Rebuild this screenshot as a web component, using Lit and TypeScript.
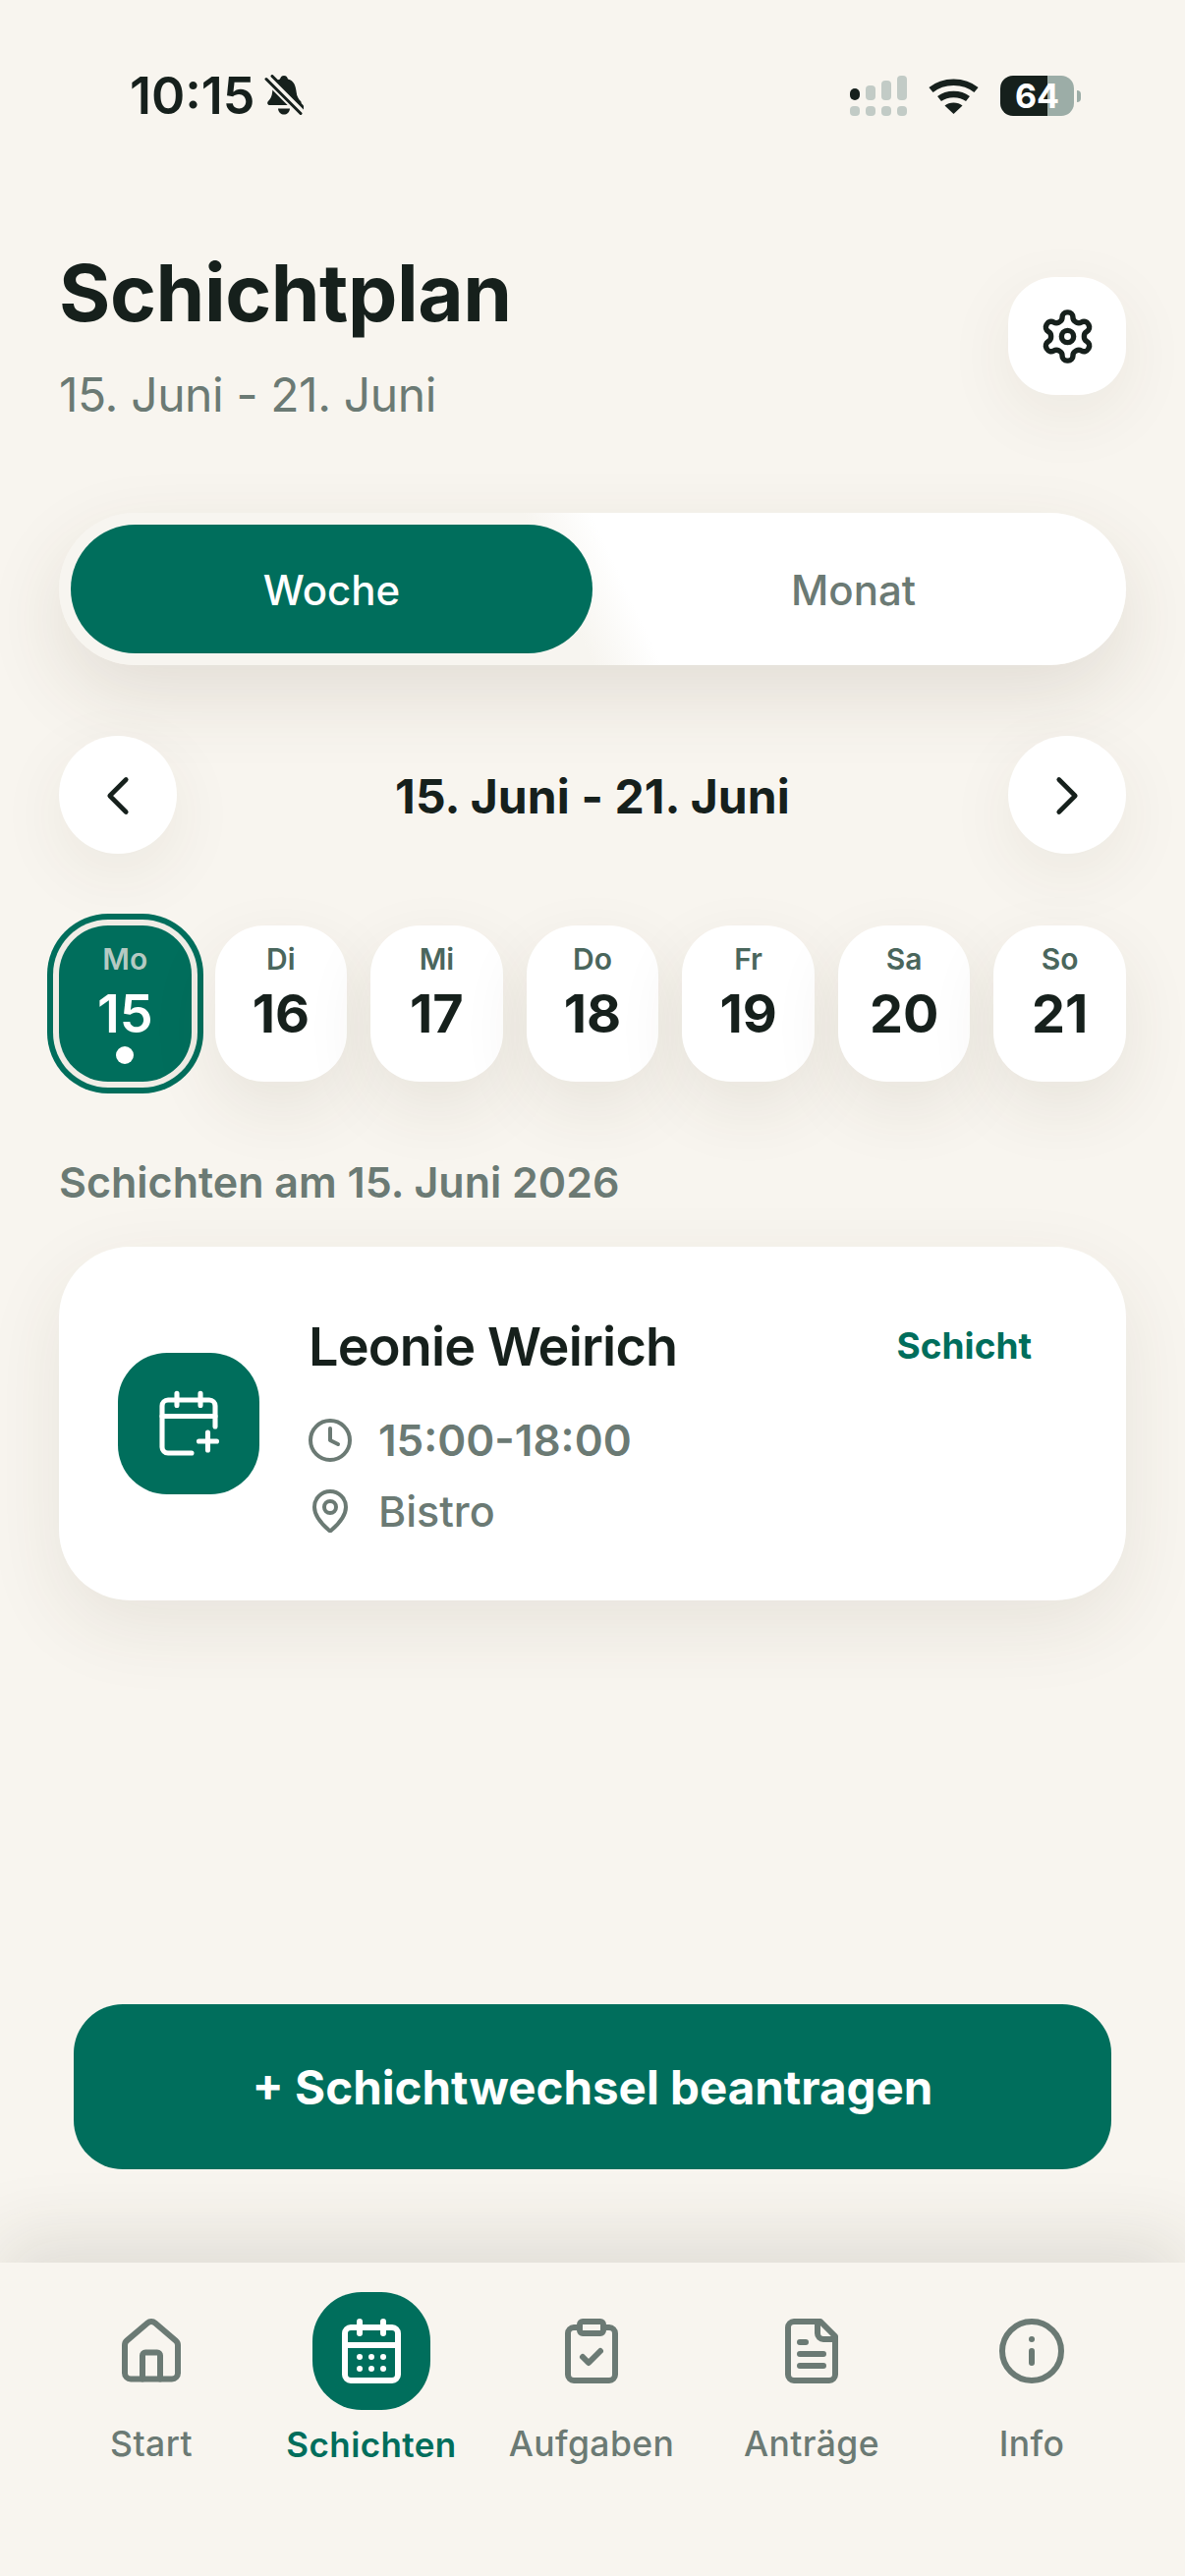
import { LitElement, html, css, svg } from 'lit';
import { customElement } from 'lit/decorators.js';

const icon = (size: number, width: number, body: unknown) => html`
  <svg
    width=${size}
    height=${size}
    viewBox="0 0 24 24"
    fill="none"
    stroke="currentColor"
    stroke-width=${width}
    stroke-linecap="round"
    stroke-linejoin="round"
  >${body}</svg>
`;

const GEAR = svg`
  <path d="M12.22 2h-.44a2 2 0 0 0-2 2v.18a2 2 0 0 1-1 1.73l-.43.25a2 2 0 0 1-2 0l-.15-.08a2 2 0 0 0-2.73.73l-.22.38a2 2 0 0 0 .73 2.73l.15.1a2 2 0 0 1 1 1.72v.51a2 2 0 0 1-1 1.74l-.15.09a2 2 0 0 0-.73 2.73l.22.38a2 2 0 0 0 2.73.73l.15-.08a2 2 0 0 1 2 0l.43.25a2 2 0 0 1 1 1.73V20a2 2 0 0 0 2 2h.44a2 2 0 0 0 2-2v-.18a2 2 0 0 1 1-1.73l.43-.25a2 2 0 0 1 2 0l.15.08a2 2 0 0 0 2.73-.73l.22-.39a2 2 0 0 0-.73-2.73l-.15-.08a2 2 0 0 1-1-1.74v-.5a2 2 0 0 1 1-1.74l.15-.09a2 2 0 0 0 .73-2.73l-.22-.38a2 2 0 0 0-2.73-.73l-.15.08a2 2 0 0 1-2 0l-.43-.25a2 2 0 0 1-1-1.73V4a2 2 0 0 0-2-2z"/>
  <circle cx="12" cy="12" r="2.5"/>
`;
const CHEVRON_LEFT = svg`<path d="m15 18-6-6 6-6"/>`;
const CHEVRON_RIGHT = svg`<path d="m9 18 6-6-6-6"/>`;
const CALENDAR_PLUS = svg`
  <path d="M8 1.800v4M16 1.800v4M3 9.500h18"/>
  <path d="M21 13V6a2 2 0 0 0-2-2H5a2 2 0 0 0-2 2v14a2 2 0 0 0 2 2h8"/>
  <path d="M15.500 18h6M18.500 15v6"/>
`;
const CLOCK = svg`<circle cx="12" cy="12" r="10"/><path d="M12 6v6l4 2"/>`;
const PIN = svg`
  <path d="M20 10c0 4.993-5.539 10.193-7.399 11.799a1 1 0 0 1-1.202 0C9.539 20.193 4 14.993 4 10a8 8 0 0 1 16 0"/>
  <circle cx="12" cy="10" r="3"/>
`;
const HOME = svg`
  <path d="M15 21.500v-8a1 1 0 0 0-1-1h-4a1 1 0 0 0-1 1v8"/>
  <path d="M3 10a2 2 0 0 1 .709-1.528l7-5.999a2 2 0 0 1 2.582 0l7 5.999A2 2 0 0 1 21 10v9.500a2 2 0 0 1-2 2H5a2 2 0 0 1-2-2z"/>
`;
const CALENDAR = svg`
  <path d="M8 2v4M16 2v4"/>
  <rect width="18" height="18" x="3" y="4" rx="2"/>
  <path d="M3 10h18"/>
  <path d="M8 14h.01M12 14h.01M16 14h.01M8 18h.01M12 18h.01M16 18h.01"/>
`;
const CLIPBOARD = svg`
  <rect width="8" height="4" x="8" y="2" rx="1"/>
  <path d="M16 4h2a2 2 0 0 1 2 2v14a2 2 0 0 1-2 2H6a2 2 0 0 1-2-2V6a2 2 0 0 1 2-2h2"/>
  <path d="m9 14 2 2 4-4"/>
`;
const FILE = svg`
  <path d="M15 2H6a2 2 0 0 0-2 2v16a2 2 0 0 0 2 2h12a2 2 0 0 0 2-2V7Z"/>
  <path d="M14 2v4a2 2 0 0 0 2 2h4"/>
  <path d="M10 9H8M16 13H8M16 17H8"/>
`;
const INFO = svg`<circle cx="12" cy="12" r="10"/><path d="M12 16v-4M12 8h.01"/>`;

const DAYS = [
  { dow: 'Mo', num: 15, selected: true },
  { dow: 'Di', num: 16 },
  { dow: 'Mi', num: 17 },
  { dow: 'Do', num: 18 },
  { dow: 'Fr', num: 19 },
  { dow: 'Sa', num: 20 },
  { dow: 'So', num: 21 },
];

const TABS = [
  { label: 'Start', icon: HOME },
  { label: 'Schichten', icon: CALENDAR, active: true },
  { label: 'Aufgaben', icon: CLIPBOARD },
  { label: 'Anträge', icon: FILE },
  { label: 'Info', icon: INFO },
];

@customElement('app-root')
export class AppRoot extends LitElement {
  static styles = css`
    :host {
      display: block;
      width: 1206px;
      height: 2622px;
      overflow: hidden;
      background: #f8f5ef;
      color: #16201c;
      font-family: Inter, 'Noto Sans', sans-serif;
    }

    .page {
      display: flex;
      flex-direction: column;
      height: 2622px;
    }

    /* --- Status bar --- */
    .status {
      display: flex;
      align-items: center;
      height: 41px;
      padding: 77px 106px 0 132px;
    }
    .time {
      font-size: 52px;
      font-weight: 600;
      line-height: 41px;
    }
    .bell {
      margin-left: 9px;
      display: block;
    }
    .status-right {
      display: flex;
      align-items: center;
      margin-left: auto;
    }
    .wifi {
      margin-left: 22px;
      display: block;
    }
    .battery {
      display: flex;
      align-items: center;
      justify-content: center;
      width: 75px;
      height: 41px;
      margin-left: 22px;
      border-radius: 13px;
      background: linear-gradient(90deg, #16201c 0 48px, #9cada7 48px);
      color: #fff;
      font-size: 34px;
      font-weight: 700;
      line-height: 41px;
    }
    .nub {
      width: 4px;
      height: 12px;
      margin-left: 3px;
      border-radius: 0 6px 6px 0;
      background: #9cada7;
    }

    /* --- Main column --- */
    .main {
      display: flex;
      flex-direction: column;
      padding: 0 60px;
    }

    .header {
      display: flex;
      justify-content: space-between;
      margin-top: 140px;
    }
    h1 {
      margin: 0;
      font-size: 80px;
      font-weight: 700;
      line-height: 80px;
      letter-spacing: -0.45px;
    }
    .subtitle {
      margin-top: 34px;
      font-size: 48px;
      font-weight: 400;
      line-height: 60px;
      letter-spacing: -0.4px;
      color: #6b7a74;
    }
    .round-btn {
      display: flex;
      align-items: center;
      justify-content: center;
      width: 120px;
      height: 120px;
      background: #fff;
      box-shadow: 0 20px 70px rgba(70, 60, 35, 0.07);
      color: #16201c;
    }
    .gear {
      margin-top: 24px;
      border-radius: 48px;
    }

    .segment {
      display: grid;
      grid-template-columns: 1fr 1fr;
      height: 155px;
      margin-top: 90px;
      padding: 12px;
      box-sizing: border-box;
      border-radius: 78px;
      background: linear-gradient(65deg, #f7f5f0 0 47%, #fff 53%);
      box-shadow: 0 30px 80px rgba(70, 60, 35, 0.12);
    }
    .seg-item {
      display: flex;
      align-items: center;
      justify-content: center;
      padding-top: 2px;
      border-radius: 66px;
      font-size: 42px;
      font-weight: 500;
      color: #6b7a74;
    }
    .seg-item.on {
      background: #006e5c;
      color: #fff;
    }

    .week-nav {
      display: flex;
      align-items: center;
      justify-content: space-between;
      margin-top: 72px;
    }
    .week-nav .round-btn {
      border-radius: 50%;
    }
    .week-nav svg {
      margin-top: 2px;
    }
    .week-label {
      padding-top: 2px;
      font-size: 48px;
      font-weight: 700;
      letter-spacing: 0.1px;
    }

    .days {
      display: grid;
      grid-template-columns: repeat(7, 1fr);
      gap: 24px;
      margin-top: 73px;
    }
    .day {
      display: flex;
      flex-direction: column;
      align-items: center;
      height: 159px;
      padding-top: 16px;
      box-sizing: border-box;
      border-radius: 50px;
      background: #fff;
      box-shadow: 0 26px 70px rgba(70, 60, 35, 0.09);
    }
    .dow {
      font-size: 30px;
      font-weight: 600;
      line-height: 36px;
      color: #4a665c;
    }
    .num {
      margin-top: 8px;
      font-size: 54px;
      font-weight: 700;
      line-height: 60px;
    }
    .day.sel {
      background: #006e5c;
      box-shadow: 0 0 0 6px #f0ede6, 0 0 0 12px #006e5c;
    }
    .day.sel .dow {
      color: #b5cac3;
    }
    .day.sel .num {
      color: #fff;
      font-weight: 600;
    }
    .dot {
      width: 18px;
      height: 18px;
      margin-top: 3px;
      border-radius: 50%;
      background: #fff;
    }

    .section {
      margin-top: 78px;
      font-size: 43px;
      font-weight: 600;
      line-height: 48px;
      color: #6b7a74;
    }

    .card {
      display: flex;
      height: 360px;
      margin-top: 42px;
      padding: 0 96px 0 60px;
      box-sizing: border-box;
      border-radius: 72px;
      background: #fff;
      box-shadow: 0 26px 80px rgba(70, 60, 35, 0.09);
    }
    .tile {
      display: flex;
      flex: none;
      align-items: center;
      justify-content: center;
      align-self: center;
      width: 144px;
      height: 144px;
      border-radius: 50px;
      background: #006e5c;
      color: #fff;
    }
    .info {
      flex: 1;
      margin-left: 50px;
      padding-top: 69px;
    }
    .name-row {
      display: flex;
      align-items: center;
      justify-content: space-between;
      height: 64px;
    }
    .name {
      font-size: 54px;
      font-weight: 600;
      letter-spacing: -0.85px;
    }
    .kind {
      padding-bottom: 2px;
      font-size: 37px;
      font-weight: 700;
      color: #006e5c;
    }
    .meta {
      display: flex;
      align-items: center;
      gap: 25px;
      height: 48px;
      margin-left: -2px;
      color: #6b7a74;
      font-size: 43px;
    }
    .meta svg {
      display: block;
      flex: none;
    }
    .meta.time-row {
      margin-top: 40px;
      font-size: 44px;
      font-weight: 600;
    }
    .meta.place-row {
      margin-top: 24px;
      font-weight: 500;
    }

    .action {
      display: flex;
      align-items: center;
      justify-content: center;
      height: 168px;
      margin: 411px 15px 0;
      border-radius: 50px;
      background: #006e5c;
      color: #fff;
      font-size: 47.5px;
      font-weight: 700;
    }

    /* --- Tab bar --- */
    .tabbar {
      display: grid;
      grid-template-columns: repeat(5, 224px);
      margin-top: auto;
      height: 319px;
      padding: 30px 42px 0;
      box-sizing: border-box;
      background: #f8f5ef;
      box-shadow: 0 -24px 70px rgba(50, 50, 35, 0.12);
    }
    .tab {
      display: flex;
      flex-direction: column;
      align-items: center;
      color: #6b7a74;
    }
    .tab-icon {
      display: flex;
      align-items: center;
      justify-content: center;
      width: 120px;
      height: 120px;
      border-radius: 50px;
    }
    .tab-label {
      margin-top: 13px;
      font-size: 35.5px;
      font-weight: 500;
      line-height: 44px;
      letter-spacing: 0.4px;
    }
    .tab.on {
      color: #006e5c;
    }
    .tab.on .tab-icon {
      background: #006e5c;
      color: #fff;
    }
    .tab.on .tab-label {
      font-size: 35px;
      font-weight: 600;
    }
  `;

  private _statusBar() {
    return html`
      <div class="status">
        <span class="time">10:15</span>
        <svg class="bell" width="40" height="44" viewBox="0 0 40 44" fill="#16201c">
          <path d="M20 1c2.400 0 3.600 1.600 4 3.600 6.200 1.600 8 7 8.600 13 .5 4.800 2 7 4.400 9.500 1.200 1.300.6 4-1.500 4H5.500c-2.400 0-3-2.600-1.500-4 2.500-2.500 3.700-4.800 4.200-9.500.6-6 2.300-11.400 7.800-13C16.400 2.600 17.600 1 20 1z"/>
          <path d="M14 34.500h12c-.5 4-3 6-6 6s-5.500-2-6-6z"/>
          <path d="M3 4l33 33" stroke="#f8f5ef" stroke-width="9"/>
          <path d="M2 4.500l35 35" stroke="#16201c" stroke-width="3" stroke-linecap="round"/>
          <path d="M8 1.500l33 33" stroke="#16201c" stroke-width="3" stroke-linecap="round"/>
        </svg>
        <div class="status-right">
          <svg width="58" height="41" viewBox="0 0 58 41">
            <rect x="0" y="13" width="10" height="12" rx="5" fill="#16201c"/>
            <rect x="16" y="10" width="10" height="15" rx="4" fill="#c2cbc6"/>
            <rect x="32" y="5" width="10" height="20" rx="4" fill="#c2cbc6"/>
            <rect x="48" y="0" width="10" height="25" rx="4" fill="#c2cbc6"/>
            <rect x="0" y="31" width="10" height="10" rx="4" fill="#c2cbc6"/>
            <rect x="16" y="31" width="10" height="10" rx="4" fill="#c2cbc6"/>
            <rect x="32" y="31" width="10" height="10" rx="4" fill="#c2cbc6"/>
            <rect x="48" y="31" width="10" height="10" rx="4" fill="#c2cbc6"/>
          </svg>
          <svg class="wifi" width="51" height="37" viewBox="0 0 51 37" fill="none" stroke="#16201c">
            <path d="M2.500 12.500C15 2 36 2 48.500 12.500" stroke-width="6.500"/>
            <path d="M11 21.500C19 15.500 32 15.500 40 21.500" stroke-width="6.500"/>
            <path d="M25.500 37L16.500 28.500C21 24.500 30 24.500 34.500 28.500Z" fill="#16201c" stroke="none"/>
          </svg>
          <div class="battery">64</div>
          <div class="nub"></div>
        </div>
      </div>
    `;
  }

  render() {
    return html`
      <div class="page">
        ${this._statusBar()}
        <div class="main">
          <div class="header">
            <div>
              <h1>Schichtplan</h1>
              <div class="subtitle">15. Juni - 21. Juni</div>
            </div>
            <div class="round-btn gear">${icon(59, 2.2, GEAR)}</div>
          </div>

          <div class="segment">
            <div class="seg-item on">Woche</div>
            <div class="seg-item">Monat</div>
          </div>

          <div class="week-nav">
            <div class="round-btn">${icon(66, 1.7, CHEVRON_LEFT)}</div>
            <div class="week-label">15. Juni - 21. Juni</div>
            <div class="round-btn">${icon(66, 1.7, CHEVRON_RIGHT)}</div>
          </div>

          <div class="days">
            ${DAYS.map(
              (d) => html`
                <div class="day ${d.selected ? 'sel' : ''}">
                  <span class="dow">${d.dow}</span>
                  <span class="num">${d.num}</span>
                  ${d.selected ? html`<span class="dot"></span>` : ''}
                </div>
              `
            )}
          </div>

          <div class="section">Schichten am 15. Juni 2026</div>

          <div class="card">
            <div class="tile">${icon(72, 1.7, CALENDAR_PLUS)}</div>
            <div class="info">
              <div class="name-row">
                <span class="name">Leonie Weirich</span>
                <span class="kind">Schicht</span>
              </div>
              <div class="meta time-row">${icon(48, 2, CLOCK)}<span>15:00-18:00</span></div>
              <div class="meta place-row">${icon(48, 2, PIN)}<span>Bistro</span></div>
            </div>
          </div>

          <div class="action">+ Schichtwechsel beantragen</div>
        </div>

        <div class="tabbar">
          ${TABS.map(
            (t) => html`
              <div class="tab ${t.active ? 'on' : ''}">
                <div class="tab-icon">${icon(72, 2, t.icon)}</div>
                <div class="tab-label">${t.label}</div>
              </div>
            `
          )}
        </div>
      </div>
    `;
  }
}
